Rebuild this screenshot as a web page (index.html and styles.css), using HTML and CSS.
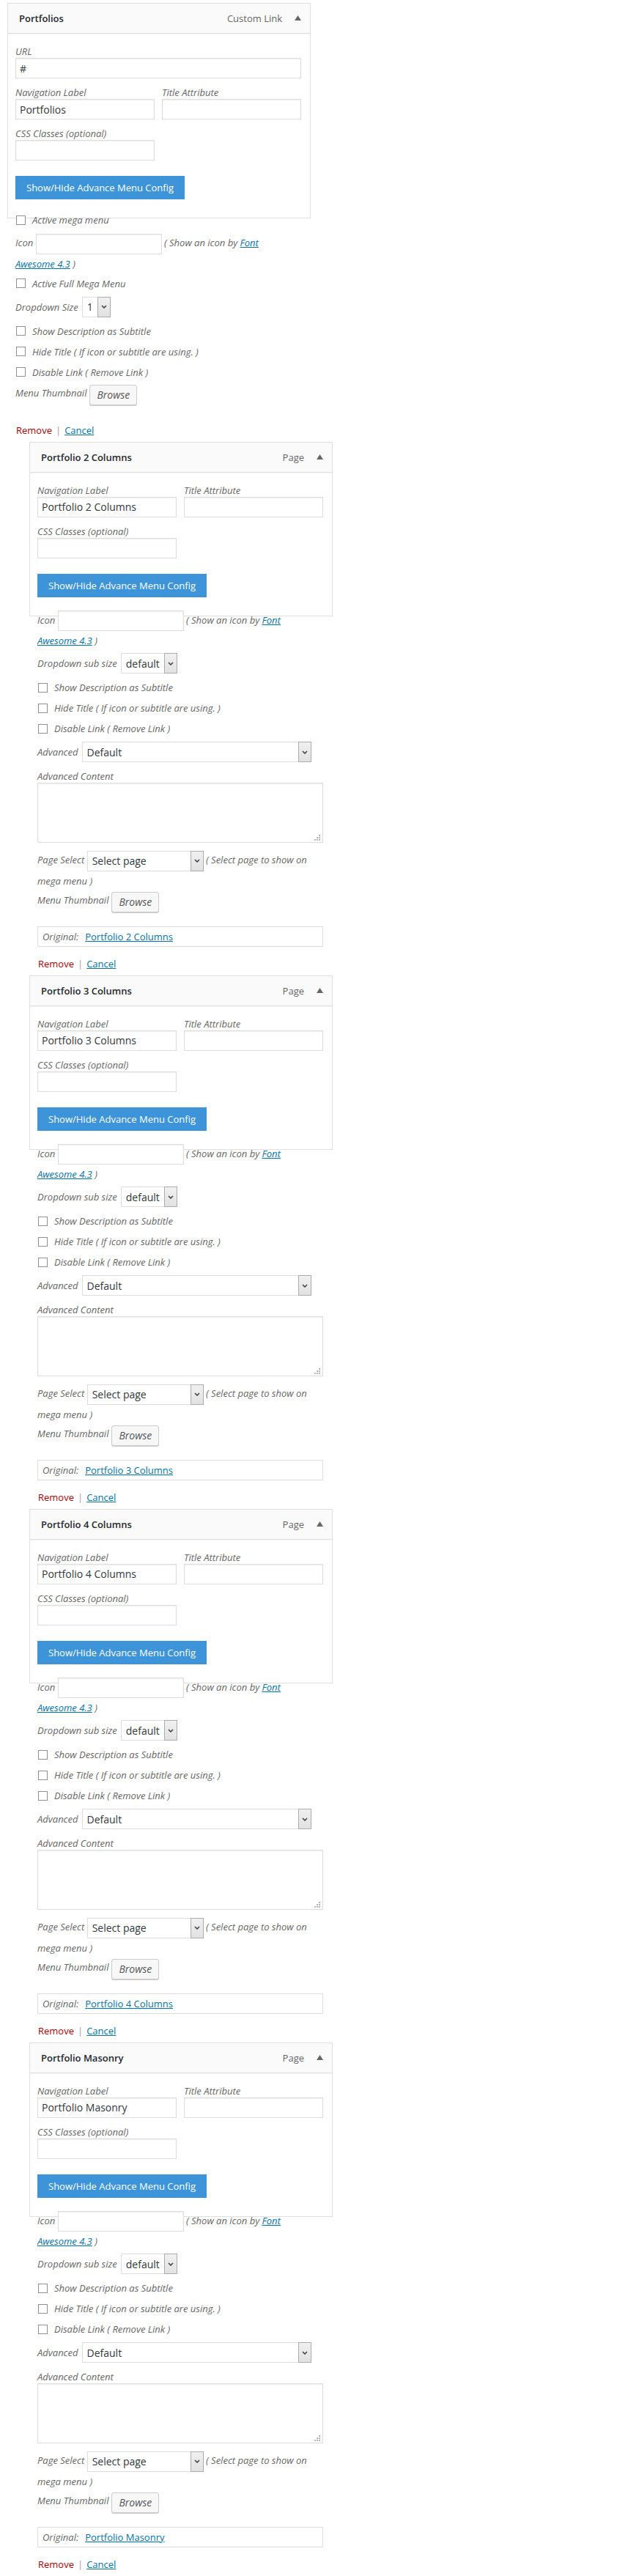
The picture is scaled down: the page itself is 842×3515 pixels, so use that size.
FILE: index.html
```html
<!DOCTYPE html>
<html lang="en">
<head>
  <meta charset="UTF-8">
  <title>Menu Structure</title>
  <link rel="stylesheet" href="styles.css">
</head>
<body>
  <div class="menu">

    <!-- custom link, top level -->
    <div class="item custom">
      <div class="item-bar">
        <span class="item-title">Portfolios</span>
        <span class="item-controls"><span class="item-type">Custom Link</span><svg class="item-arrow" width="9" height="7" viewBox="0 0 9 7"><path d="M0 7L4.5 0 9 7z"/></svg></span>
      </div>
      <div class="item-settings">
        <p class="field"><label>URL</label><input class="text" type="text" value="#"></p>
        <div class="field-row">
          <p class="field"><label>Navigation Label</label><input class="text" type="text" value="Portfolios"></p>
          <p class="field"><label>Title Attribute</label><input class="text" type="text"></p>
        </div>
        <p class="field half"><label>CSS Classes (optional)</label><input class="text" type="text"></p>
        <button class="btn-advance" type="button">Show/Hide Advance Menu Config</button>
      </div>
      <div class="advanced">
        <label class="opt-check"><input type="checkbox">Active mega menu</label>
        <p class="opt-inline">Icon <input class="text icon-input" type="text"> ( Show an icon by <a href="#">Font Awesome 4.3</a> )</p>
        <label class="opt-check"><input type="checkbox">Active Full Mega Menu</label>
        <div class="opt-select"><span>Dropdown Size</span><span class="select sel-size"><select><option>1</option></select><span class="drop"><svg width="8" height="5" viewBox="0 0 8 5"><path d="M1 1l3 3 3-3"/></svg></span></span></div>
        <label class="opt-check"><input type="checkbox">Show Description as Subtitle</label>
        <label class="opt-check"><input type="checkbox">Hide Title ( If icon or subtitle are using. )</label>
        <label class="opt-check"><input type="checkbox">Disable Link ( Remove Link )</label>
        <div class="opt-thumb"><span>Menu Thumbnail</span><button class="browse" type="button">Browse</button></div>
      </div>
      <div class="item-actions"><a class="remove" href="#">Remove</a><span class="sep">|</span><a class="cancel" href="#">Cancel</a></div>
    </div>

    <!-- pages, sub items -->
    <div class="item sub">
      <div class="item-bar">
        <span class="item-title">Portfolio 2 Columns</span>
        <span class="item-controls"><span class="item-type">Page</span><svg class="item-arrow" width="9" height="7" viewBox="0 0 9 7"><path d="M0 7L4.5 0 9 7z"/></svg></span>
      </div>
      <div class="item-settings">
        <div class="field-row">
          <p class="field"><label>Navigation Label</label><input class="text" type="text" value="Portfolio 2 Columns"></p>
          <p class="field"><label>Title Attribute</label><input class="text" type="text"></p>
        </div>
        <p class="field half"><label>CSS Classes (optional)</label><input class="text" type="text"></p>
        <button class="btn-advance" type="button">Show/Hide Advance Menu Config</button>
      </div>
      <div class="advanced">
        <p class="opt-inline">Icon <input class="text icon-input" type="text"> ( Show an icon by <a href="#">Font Awesome 4.3</a> )</p>
        <div class="opt-select"><span>Dropdown sub size</span><span class="select sel-sub"><select><option>default</option></select><span class="drop"><svg width="8" height="5" viewBox="0 0 8 5"><path d="M1 1l3 3 3-3"/></svg></span></span></div>
        <label class="opt-check"><input type="checkbox">Show Description as Subtitle</label>
        <label class="opt-check"><input type="checkbox">Hide Title ( If icon or subtitle are using. )</label>
        <label class="opt-check"><input type="checkbox">Disable Link ( Remove Link )</label>
        <div class="opt-select"><span>Advanced</span><span class="select sel-adv"><select><option>Default</option></select><span class="drop"><svg width="8" height="5" viewBox="0 0 8 5"><path d="M1 1l3 3 3-3"/></svg></span></span></div>
        <p class="adv-label">Advanced Content</p>
        <div class="textarea-wrap"><textarea></textarea><svg class="grip" width="8" height="8" viewBox="0 0 8 8"><path d="M6 0h2v2H6zM3 3h2v2H3zM6 3h2v2H6zM0 6h2v2H0zM3 6h2v2H3zM6 6h2v2H6z"/></svg></div>
        <p class="opt-inline">Page Select <span class="select sel-page"><select><option>Select page</option></select><span class="drop"><svg width="8" height="5" viewBox="0 0 8 5"><path d="M1 1l3 3 3-3"/></svg></span></span> ( Select page to show on mega menu )</p>
        <div class="opt-thumb"><span>Menu Thumbnail</span><button class="browse" type="button">Browse</button></div>
        <div class="original"><span>Original:</span><a href="#">Portfolio 2 Columns</a></div>
      </div>
      <div class="item-actions"><a class="remove" href="#">Remove</a><span class="sep">|</span><a class="cancel" href="#">Cancel</a></div>
    </div>

    <div class="item sub">
      <div class="item-bar">
        <span class="item-title">Portfolio 3 Columns</span>
        <span class="item-controls"><span class="item-type">Page</span><svg class="item-arrow" width="9" height="7" viewBox="0 0 9 7"><path d="M0 7L4.5 0 9 7z"/></svg></span>
      </div>
      <div class="item-settings">
        <div class="field-row">
          <p class="field"><label>Navigation Label</label><input class="text" type="text" value="Portfolio 3 Columns"></p>
          <p class="field"><label>Title Attribute</label><input class="text" type="text"></p>
        </div>
        <p class="field half"><label>CSS Classes (optional)</label><input class="text" type="text"></p>
        <button class="btn-advance" type="button">Show/Hide Advance Menu Config</button>
      </div>
      <div class="advanced">
        <p class="opt-inline">Icon <input class="text icon-input" type="text"> ( Show an icon by <a href="#">Font Awesome 4.3</a> )</p>
        <div class="opt-select"><span>Dropdown sub size</span><span class="select sel-sub"><select><option>default</option></select><span class="drop"><svg width="8" height="5" viewBox="0 0 8 5"><path d="M1 1l3 3 3-3"/></svg></span></span></div>
        <label class="opt-check"><input type="checkbox">Show Description as Subtitle</label>
        <label class="opt-check"><input type="checkbox">Hide Title ( If icon or subtitle are using. )</label>
        <label class="opt-check"><input type="checkbox">Disable Link ( Remove Link )</label>
        <div class="opt-select"><span>Advanced</span><span class="select sel-adv"><select><option>Default</option></select><span class="drop"><svg width="8" height="5" viewBox="0 0 8 5"><path d="M1 1l3 3 3-3"/></svg></span></span></div>
        <p class="adv-label">Advanced Content</p>
        <div class="textarea-wrap"><textarea></textarea><svg class="grip" width="8" height="8" viewBox="0 0 8 8"><path d="M6 0h2v2H6zM3 3h2v2H3zM6 3h2v2H6zM0 6h2v2H0zM3 6h2v2H3zM6 6h2v2H6z"/></svg></div>
        <p class="opt-inline">Page Select <span class="select sel-page"><select><option>Select page</option></select><span class="drop"><svg width="8" height="5" viewBox="0 0 8 5"><path d="M1 1l3 3 3-3"/></svg></span></span> ( Select page to show on mega menu )</p>
        <div class="opt-thumb"><span>Menu Thumbnail</span><button class="browse" type="button">Browse</button></div>
        <div class="original"><span>Original:</span><a href="#">Portfolio 3 Columns</a></div>
      </div>
      <div class="item-actions"><a class="remove" href="#">Remove</a><span class="sep">|</span><a class="cancel" href="#">Cancel</a></div>
    </div>

    <div class="item sub">
      <div class="item-bar">
        <span class="item-title">Portfolio 4 Columns</span>
        <span class="item-controls"><span class="item-type">Page</span><svg class="item-arrow" width="9" height="7" viewBox="0 0 9 7"><path d="M0 7L4.5 0 9 7z"/></svg></span>
      </div>
      <div class="item-settings">
        <div class="field-row">
          <p class="field"><label>Navigation Label</label><input class="text" type="text" value="Portfolio 4 Columns"></p>
          <p class="field"><label>Title Attribute</label><input class="text" type="text"></p>
        </div>
        <p class="field half"><label>CSS Classes (optional)</label><input class="text" type="text"></p>
        <button class="btn-advance" type="button">Show/Hide Advance Menu Config</button>
      </div>
      <div class="advanced">
        <p class="opt-inline">Icon <input class="text icon-input" type="text"> ( Show an icon by <a href="#">Font Awesome 4.3</a> )</p>
        <div class="opt-select"><span>Dropdown sub size</span><span class="select sel-sub"><select><option>default</option></select><span class="drop"><svg width="8" height="5" viewBox="0 0 8 5"><path d="M1 1l3 3 3-3"/></svg></span></span></div>
        <label class="opt-check"><input type="checkbox">Show Description as Subtitle</label>
        <label class="opt-check"><input type="checkbox">Hide Title ( If icon or subtitle are using. )</label>
        <label class="opt-check"><input type="checkbox">Disable Link ( Remove Link )</label>
        <div class="opt-select"><span>Advanced</span><span class="select sel-adv"><select><option>Default</option></select><span class="drop"><svg width="8" height="5" viewBox="0 0 8 5"><path d="M1 1l3 3 3-3"/></svg></span></span></div>
        <p class="adv-label">Advanced Content</p>
        <div class="textarea-wrap"><textarea></textarea><svg class="grip" width="8" height="8" viewBox="0 0 8 8"><path d="M6 0h2v2H6zM3 3h2v2H3zM6 3h2v2H6zM0 6h2v2H0zM3 6h2v2H3zM6 6h2v2H6z"/></svg></div>
        <p class="opt-inline">Page Select <span class="select sel-page"><select><option>Select page</option></select><span class="drop"><svg width="8" height="5" viewBox="0 0 8 5"><path d="M1 1l3 3 3-3"/></svg></span></span> ( Select page to show on mega menu )</p>
        <div class="opt-thumb"><span>Menu Thumbnail</span><button class="browse" type="button">Browse</button></div>
        <div class="original"><span>Original:</span><a href="#">Portfolio 4 Columns</a></div>
      </div>
      <div class="item-actions"><a class="remove" href="#">Remove</a><span class="sep">|</span><a class="cancel" href="#">Cancel</a></div>
    </div>

    <div class="item sub">
      <div class="item-bar">
        <span class="item-title">Portfolio Masonry</span>
        <span class="item-controls"><span class="item-type">Page</span><svg class="item-arrow" width="9" height="7" viewBox="0 0 9 7"><path d="M0 7L4.5 0 9 7z"/></svg></span>
      </div>
      <div class="item-settings">
        <div class="field-row">
          <p class="field"><label>Navigation Label</label><input class="text" type="text" value="Portfolio Masonry"></p>
          <p class="field"><label>Title Attribute</label><input class="text" type="text"></p>
        </div>
        <p class="field half"><label>CSS Classes (optional)</label><input class="text" type="text"></p>
        <button class="btn-advance" type="button">Show/Hide Advance Menu Config</button>
      </div>
      <div class="advanced">
        <p class="opt-inline">Icon <input class="text icon-input" type="text"> ( Show an icon by <a href="#">Font Awesome 4.3</a> )</p>
        <div class="opt-select"><span>Dropdown sub size</span><span class="select sel-sub"><select><option>default</option></select><span class="drop"><svg width="8" height="5" viewBox="0 0 8 5"><path d="M1 1l3 3 3-3"/></svg></span></span></div>
        <label class="opt-check"><input type="checkbox">Show Description as Subtitle</label>
        <label class="opt-check"><input type="checkbox">Hide Title ( If icon or subtitle are using. )</label>
        <label class="opt-check"><input type="checkbox">Disable Link ( Remove Link )</label>
        <div class="opt-select"><span>Advanced</span><span class="select sel-adv"><select><option>Default</option></select><span class="drop"><svg width="8" height="5" viewBox="0 0 8 5"><path d="M1 1l3 3 3-3"/></svg></span></span></div>
        <p class="adv-label">Advanced Content</p>
        <div class="textarea-wrap"><textarea></textarea><svg class="grip" width="8" height="8" viewBox="0 0 8 8"><path d="M6 0h2v2H6zM3 3h2v2H3zM6 3h2v2H6zM0 6h2v2H0zM3 6h2v2H3zM6 6h2v2H6z"/></svg></div>
        <p class="opt-inline">Page Select <span class="select sel-page"><select><option>Select page</option></select><span class="drop"><svg width="8" height="5" viewBox="0 0 8 5"><path d="M1 1l3 3 3-3"/></svg></span></span> ( Select page to show on mega menu )</p>
        <div class="opt-thumb"><span>Menu Thumbnail</span><button class="browse" type="button">Browse</button></div>
        <div class="original"><span>Original:</span><a href="#">Portfolio Masonry</a></div>
      </div>
      <div class="item-actions"><a class="remove" href="#">Remove</a><span class="sep">|</span><a class="cancel" href="#">Cancel</a></div>
    </div>

  </div>
</body>
</html>
```

FILE: styles.css
```css
body {
  margin: 0;
  padding: 4px 0 0 10px;
  background: #fff;
  font-family: 'Open Sans', 'Liberation Sans', sans-serif;
  font-size: 13px;
  color: #444;
}

p {
  margin: 0;
}

a {
  color: #0073aa;
}

.item {
  width: 414px;
}

.item.sub {
  margin-left: 30px;
}

.item + .item {
  margin-top: 6px;
}

/* bar on top of each item */
.item-bar {
  box-sizing: border-box;
  height: 42px;
  display: flex;
  align-items: center;
  justify-content: space-between;
  padding: 0 12px 0 15px;
  background: #fafafa;
  border: 1px solid #dfdfdf;
  box-shadow: 0 1px 1px rgba(0,0,0,0.04);
}

.item-title {
  font-weight: 600;
  color: #23282d;
}

.item-controls {
  display: flex;
  align-items: center;
  gap: 17px;
  color: #666;
}

.item-arrow {
  fill: #666;
  margin-top: -1px;
}

.item-settings {
  border: 1px solid #dfdfdf;
  border-top: 0;
  padding: 15px 12px 25px 10px;
}

.field label {
  display: block;
  line-height: 18px;
  font-style: italic;
  color: #666;
}

.field + .field-row,
.field-row + .field {
  margin-top: 10px;
}

.field-row {
  display: flex;
  gap: 10px;
}

.field-row .field,
.field.half {
  width: 190px;
}

.text {
  box-sizing: border-box;
  width: 100%;
  height: 28px;
  margin: 0;
  padding: 0 5px;
  border: 1px solid #ddd;
  box-shadow: inset 0 1px 2px rgba(0,0,0,0.07);
  background: #fff;
  font-family: 'Open Sans', 'Liberation Sans', sans-serif;
  font-size: 14px;
  color: #32373c;
  display: block;
}

.btn-advance {
  display: block;
  margin-top: 21px;
  height: 32px;
  padding: 0 15px;
  border: 0;
  background: #3d94d8;
  color: #fff;
  font-family: 'Open Sans', 'Liberation Sans', sans-serif;
  font-size: 13px;
  cursor: pointer;
}

/* advanced config, spills over the settings box */
.advanced {
  margin-top: -12px;
  padding: 0 20px 0 11px;
  font-style: italic;
  color: #666;
}

.opt-check {
  display: flex;
  align-items: center;
  height: 28px;
}

.opt-check input {
  appearance: none;
  -webkit-appearance: none;
  box-sizing: border-box;
  width: 13px;
  height: 13px;
  margin: 0 9px 0 1px;
  border: 1px solid #8f8f8f;
  background: #fff;
}

.opt-inline {
  margin-top: 4px;
  line-height: 26px;
}

.icon-input {
  display: inline-block;
  width: 172px;
  vertical-align: middle;
}

.opt-select {
  display: flex;
  align-items: center;
  gap: 5px;
  margin: 4px 0 5px;
}

.select {
  box-sizing: border-box;
  display: inline-flex;
  height: 28px;
  border: 1px solid #ddd;
  background: #fff;
  vertical-align: middle;
}

.select select {
  appearance: none;
  -webkit-appearance: none;
  flex: 1;
  min-width: 0;
  border: 0;
  margin: 0;
  padding: 0 0 0 6px;
  background: transparent;
  font-family: 'Open Sans', 'Liberation Sans', sans-serif;
  font-size: 14px;
  font-style: normal;
  color: #32373c;
  outline: none;
}

.select .drop {
  box-sizing: border-box;
  width: 18px;
  display: flex;
  align-items: center;
  justify-content: center;
  border: 1px solid #acacac;
  margin: -1px -1px -1px 0;
  background: linear-gradient(#f0f0f0, #e1e1e1);
}

.drop svg {
  fill: none;
  stroke: #444;
  stroke-width: 1.6;
}

.sel-size { width: 39px; }
.sel-sub { width: 77px; }
.sel-adv { width: 313px; }
.sel-page { width: 159px; }

.adv-label {
  margin-top: 10px;
  line-height: 18px;
}

.textarea-wrap {
  position: relative;
  width: 390px;
  margin-bottom: 10px;
}

.textarea-wrap textarea {
  display: block;
  box-sizing: border-box;
  width: 100%;
  height: 82px;
  margin: 0;
  border: 1px solid #ddd;
  box-shadow: inset 0 1px 2px rgba(0,0,0,0.07);
  resize: none;
}

.grip {
  position: absolute;
  right: 4px;
  bottom: 3px;
  fill: #b4b4b4;
}

.opt-thumb {
  display: flex;
  align-items: flex-start;
  gap: 4px;
  margin-top: 3px;
  line-height: 22px;
}

.opt-inline + .opt-thumb {
  margin-top: 2px;
}

.browse {
  box-sizing: border-box;
  height: 28px;
  padding: 0 9px;
  border: 1px solid #ccc;
  border-radius: 3px;
  background: #f7f7f7;
  box-shadow: 0 1px 0 #ccc;
  font-family: 'Open Sans', 'Liberation Sans', sans-serif;
  font-size: 14px;
  font-style: italic;
  color: #555;
}

.original {
  box-sizing: border-box;
  width: 390px;
  height: 28px;
  margin-top: 19px;
  padding: 0 6px;
  display: flex;
  align-items: center;
  gap: 9px;
  border: 1px solid #ddd;
}

.original a {
  font-style: normal;
}

.item-actions {
  margin-top: 13px;
  padding-left: 12px;
  line-height: 20px;
}

.item.custom .item-actions {
  margin-top: 24px;
}

.remove {
  color: #a00;
  text-decoration: none;
}

.sep {
  color: #999;
  margin: 0 5px;
}
```
